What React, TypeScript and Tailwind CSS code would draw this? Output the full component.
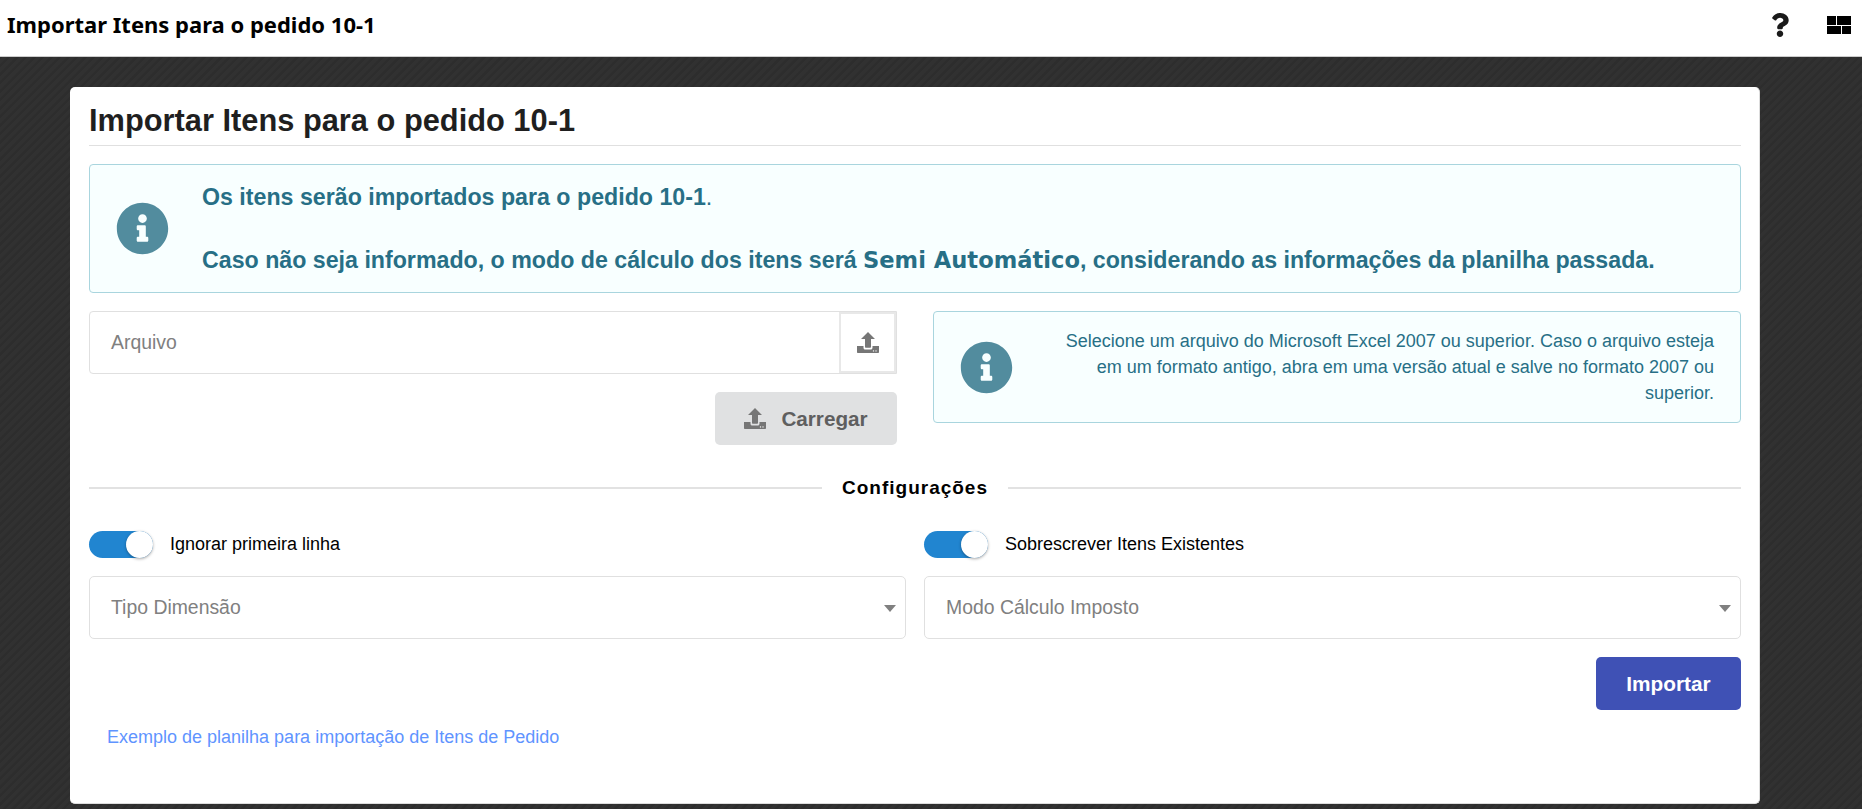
import { FaInfoCircle, FaQuestion } from "react-icons/fa";

const UploadIcon = ({ className }: { className?: string }) => (
  <svg viewBox="0 0 22 21" className={className} fill="currentColor">
    <path d="M11 0l7 7H14v7.700c0 .6-.4 1-1 1H9c-.6 0-1-.4-1-1V7H4z" />
    <path d="M0 14h6.500v1.700c0 1 .8 1.800 1.800 1.800h5.400c1 0 1.800-.8 1.800-1.800V14H22v6c0 .6-.4 1-1 1H1c-.6 0-1-.4-1-1z" />
    <circle cx="16.500" cy="18.900" r=".7" fill="#fff" />
    <circle cx="19" cy="18.900" r=".7" fill="#fff" />
  </svg>
);

const Toggle = ({ label }: { label: string }) => (
  <div className="flex items-center h-[27px]">
    <div className="relative w-[64px] h-[27px] rounded-full bg-[#2185d0]">
      <div className="absolute right-0 top-0 w-[27px] h-[27px] rounded-full bg-white shadow-[0_1px_3px_rgba(0,0,0,0.35)]" />
    </div>
    <span className="ml-[17px] text-[18px] text-black">{label}</span>
  </div>
);

const SelectBox = ({ label }: { label: string }) => (
  <div className="relative flex items-center flex-1 h-[63px] px-[21px] bg-white border border-[#e0e0e0] rounded-[5px] text-[19.4px] text-[#808080]">
    {label}
    <div className="absolute right-[9px] top-[28px] w-0 h-0 border-x-[6px] border-x-transparent border-t-[7px] border-t-[#808080]" />
  </div>
);

export default function App() {
  return (
    <div className="h-[809px] overflow-hidden font-['Liberation_Sans',Arial,sans-serif] bg-[#2f2f2f] bg-[repeating-linear-gradient(135deg,#313131_0px,#313131_3px,#2d2d2d_4px,#2d2d2d_6px)]">
      <header className="flex items-center justify-between h-[57px] pl-[7px] pr-[11px] bg-white border-b border-[#cccccc]">
        <h2 className="pb-[8px] font-['Noto_Sans',sans-serif] font-bold text-[22px] text-black">Importar Itens para o pedido 10-1</h2>
        <div className="flex items-center gap-[38px] pb-[6px]">
          <FaQuestion className="w-[18px] h-[24px] text-[#1a1a1a]" />
          <div className="flex flex-col gap-px w-[24px] h-[18px]">
            <div className="flex flex-1 gap-px">
              <div className="w-[9px] bg-black" />
              <div className="flex-1 bg-black" />
            </div>
            <div className="flex flex-1 gap-px">
              <div className="w-[14px] bg-black" />
              <div className="flex-1 bg-black" />
            </div>
          </div>
        </div>
      </header>

      <main className="mt-[30px] mx-[70px] w-[1690px] h-[717px] bg-white rounded-[5px] pl-[19px] pr-[18px] pt-[14px] border-r border-b border-[#dddddd]">
        <h1 className="text-[30.8px] leading-[39px] font-bold text-[#1f1f1f] pb-[5px] border-b border-[#e0e0e0]">Importar Itens para o pedido 10-1</h1>

        <section className="flex items-center h-[129px] mt-[18px] bg-[#f8ffff] border border-[#a9d5de] rounded-[4px] text-[#276f86]">
          <FaInfoCircle className="ml-[26px] w-[53px] h-[53px] shrink-0 text-[#528c9e]" />
          <div className="ml-[33px] text-[23.2px] font-bold leading-[63px]">
            <p>Os itens serão importados para o pedido 10-1<span className="font-normal">.</span></p>
            <p>Caso não seja informado, o modo de cálculo dos itens será <span className="font-['DejaVu_Sans',sans-serif] font-bold text-[22.600px]">Semi Automático</span>, considerando as informações da planilha passada.</p>
          </div>
        </section>

        <section className="flex justify-between mt-[18px]">
          <div className="w-[808px]">
            <div className="flex h-[63px] border border-[#e0e0e0] rounded-l-[4px]">
              <div className="flex items-center flex-1 pl-[21px] text-[19.4px] text-[#808080]">Arquivo</div>
              <div className="flex items-center justify-center w-[57px] border-2 border-[#e8e8e8] text-[#767676]">
                <UploadIcon className="w-[22px] h-[21px]" />
              </div>
            </div>
            <div className="flex justify-end mt-[18px]">
              <button className="flex items-center justify-center gap-[15px] w-[182px] h-[53px] rounded-[5px] bg-[#e0e1e2] text-[#5f5f5f] text-[20.7px] font-bold">
                <UploadIcon className="w-[22px] h-[21px] text-[#767676]" />
                Carregar
              </button>
            </div>
          </div>
          <div className="flex items-center w-[808px] h-[112px] bg-[#f8ffff] border border-[#a9d5de] rounded-[4px] text-[#276f86]">
            <FaInfoCircle className="ml-[26px] w-[53px] h-[53px] shrink-0 text-[#528c9e]" />
            <p className="ml-[24px] mr-[26px] text-[18px] leading-[26px] text-right">Selecione um arquivo do Microsoft Excel 2007 ou superior. Caso o arquivo esteja em um formato antigo, abra em uma versão atual e salve no formato 2007 ou superior.</p>
          </div>
        </section>

        <div className="flex items-center gap-[20px] mt-[32px] text-[19px] leading-[22px] font-bold tracking-[1px] text-black">
          <div className="flex-1 h-[2px] bg-[#e2e2e2]" />
          Configurações
          <div className="flex-1 h-[2px] bg-[#e2e2e2]" />
        </div>

        <section className="grid grid-cols-2 gap-x-[18px] mt-[32px]">
          <div>
            <Toggle label="Ignorar primeira linha" />
            <div className="flex mt-[18px]"><SelectBox label="Tipo Dimensão" /></div>
          </div>
          <div>
            <Toggle label="Sobrescrever Itens Existentes" />
            <div className="flex mt-[18px]"><SelectBox label="Modo Cálculo Imposto" /></div>
          </div>
        </section>

        <div className="flex justify-end mt-[18px]">
          <button className="w-[145px] h-[53px] rounded-[5px] bg-[#3f51b5] text-white text-[20.8px] font-bold">Importar</button>
        </div>

        <a className="block ml-[18px] mt-[14px] text-[18px] leading-[26px] text-[#5f94ff]">Exemplo de planilha para importação de Itens de Pedido</a>
      </main>
    </div>
  );
}
